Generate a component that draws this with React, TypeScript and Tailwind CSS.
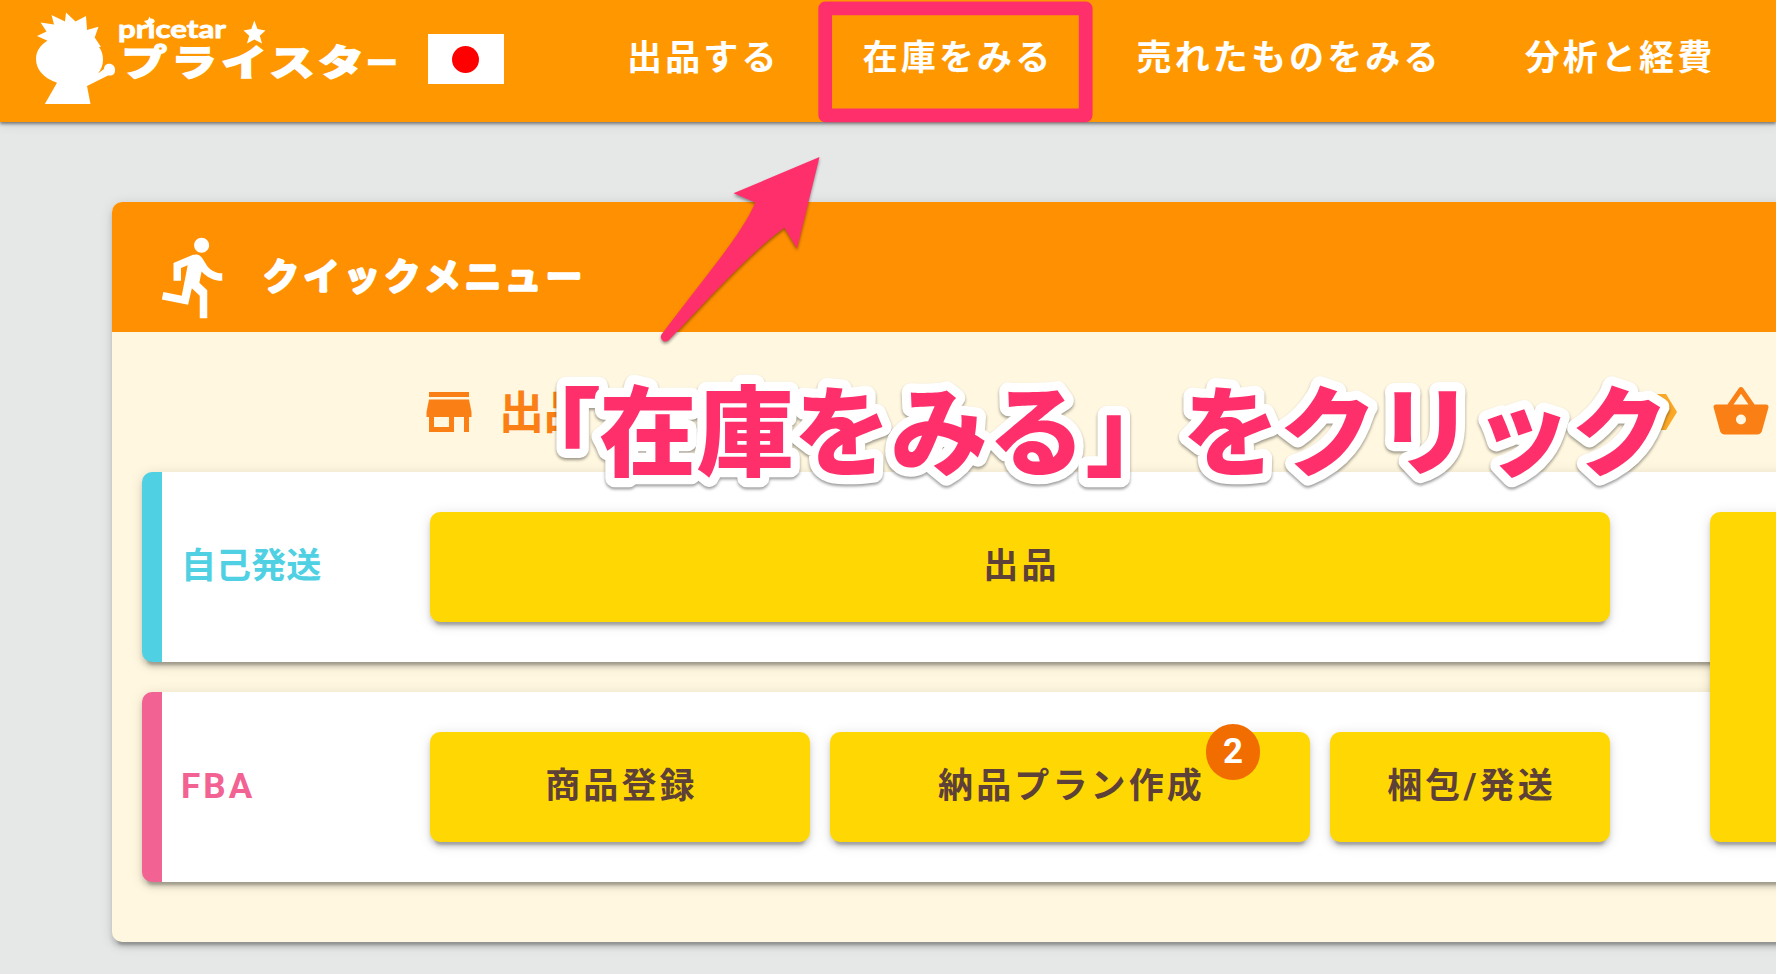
import React from "react";

const FONT = "font-[Roboto,'Noto_Sans_CJK_JP',sans-serif]";
const ELEVATION =
  "shadow-[0_7.5px_2.5px_-5px_rgba(0,0,0,0.2),0_5px_5px_0_rgba(0,0,0,0.14),0_2.5px_12.5px_0_rgba(0,0,0,0.12)]";

function Logo() {
  return (
    <svg className="block shrink-0" width="364" height="94" viewBox="34 11 364 94" fill="#fff">
      <path d="M36 59C36 51 41 44 47.5 40.7L37 36L46.500 31.500L40.600 22.500L54 24.500L51.500 15L65 21.500L66 12.500L75.500 21.500L86 16L87 30L98.500 26.700L94.700 37.500L101 47L99 47C102 51 103 55 103 60C103 65 101 69.500 98 73.500L104 69C104 62 114 62 115 69C115.500 74 113 76 108 75.500L87 86L90.500 104H44.800L57 82.700C43 78 36 69 36 59Z" />
      <path d="M254.300 20.500L257.500 29L265.500 30.500L259.800 35.800L262 43.500L254.300 39.500L247 43.500L249.200 35.800L243.500 30.500L251.300 29Z" />
      <path d="M149.500 16.500L151 20L155 21L152 24L152.500 27H146.500L147 24L144 21L148 20Z" />
      <text x="118" y="38" fontSize="25" fontWeight="700" textLength="108" lengthAdjust="spacingAndGlyphs" fontFamily="Lato, sans-serif" stroke="#fff" strokeWidth="0.8">
        pricetar
      </text>
      <g transform="scale(1.25 1)" fontWeight="900" textAnchor="middle" fontFamily="'Noto Sans CJK JP', sans-serif" stroke="#fff" strokeWidth="1.400">
        <text x="115.500 155.200 195.200 233.600 272.800" y="76" fontSize="36.500">
          プライスタ
        </text>
        <text x="305.500" y="72" fontSize="25">
          ー
        </text>
      </g>
    </svg>
  );
}

function Icon({ d, className }: { d: string; className: string }) {
  return (
    <svg className={`block shrink-0 ${className}`} viewBox="0 0 24 24" fill="currentColor">
      <path d={d} />
    </svg>
  );
}

const RUN =
  "M13.5,5.5C14.59,5.5 15.5,4.58 15.5,3.5C15.5,2.38 14.59,1.5 13.5,1.5C12.39,1.5 11.5,2.38 11.5,3.5C11.5,4.58 12.39,5.5 13.5,5.5M9.89,19.38L10.89,15L13,17V23H15V15.5L12.89,13.5L13.5,10.5C14.79,12 16.79,13 19,13V11C17.09,11 15.5,10 14.69,8.58L13.69,7C13.29,6.38 12.69,6 12,6C11.69,6 11.5,6.08 11.19,6.08L6,8.28V13H8V9.58L9.79,8.88L8.19,17L3.29,16L2.89,18L9.89,19.38Z";
const STORE =
  "M12,18H6V14H12M21,14V12L20,7H4L3,12V14H4V20H14V14H18V20H20V14M20,4H4V6H20V4Z";
const BASKET =
  "M5.5,21C4.72,21 4.04,20.55 3.71,19.9V19.9L1.1,10.44L1,10A1,1 0 0,1 2,9H6.58L11.18,2.43C11.36,2.17 11.66,2 12,2C12.34,2 12.65,2.17 12.83,2.44L17.42,9H22A1,1 0 0,1 23,10L22.96,10.29L20.29,19.9C19.96,20.55 19.28,21 18.5,21H5.5M12,4.74L9,9H15L12,4.74M12,13A2,2 0 0,0 10,15A2,2 0 0,0 12,17A2,2 0 0,0 14,15A2,2 0 0,0 12,13Z";

function Title() {
  return (
    <svg className="block shrink-0" width="360" height="130" viewBox="0 0 360 130">
      <text
        x="39 79.500 120 160.200 200.500 241 281 322"
        y="88"
        textAnchor="middle"
        fontSize="36"
        fontWeight="500"
        fontFamily="'Noto Sans CJK JP', sans-serif"
        fill="#fff"
        stroke="#fff"
        strokeWidth="3.600"
        strokeLinejoin="round"
      >
        クイックメニュー
      </text>
    </svg>
  );
}

function MenuButton({ label, className, badge }: { label: string; className: string; badge?: string }) {
  return (
    <button
      className={`relative flex h-[110px] shrink-0 items-center justify-center rounded-[10px] bg-[#ffd803] pt-px pl-[3px] text-[35px] font-bold tracking-[3.125px] whitespace-nowrap text-[#5d4037] ${ELEVATION} ${className}`}
    >
      {label}
      {badge && (
        <span className="absolute -top-2 right-[50px] flex h-14 w-[54px] items-center justify-center rounded-full bg-[#f26d00] text-[35px] tracking-normal text-white">
          {badge}
        </span>
      )}
    </button>
  );
}

function Row({ label, accent, tracking, children }: { label: string; accent: string; tracking: string; children: React.ReactNode }) {
  return (
    <section className={`flex h-[190px] w-[1900px] items-center rounded-[10px] border-l-[20px] bg-white ${ELEVATION} ${accent}`}>
      <h2 className={`w-[268px] shrink-0 pt-px pl-[19px] text-[35px] font-bold whitespace-nowrap ${tracking}`}>{label}</h2>
      <div className="flex gap-5">{children}</div>
    </section>
  );
}

function Callout() {
  return (
    <svg className="pointer-events-none absolute top-0 left-0" width="1776" height="974" viewBox="0 0 1776 974">
      <rect x="825.200" y="8.300" width="260.500" height="107" fill="none" stroke="#ff2f6c" strokeWidth="13.700" strokeLinejoin="round" />
      <g className="drop-shadow-[0_2px_1.5px_rgba(0,0,0,0.4)]">
        <path
          fill="#ff2f6c"
          d="M819.500 157L733.500 193.300L755.300 202.500C744 231 708 273 661.500 334.500C659 338.500 664 344 668.500 340.500C704 304 748 254 784.300 227.700L797 248.500Z"
        />
        <text
          x="504 599.300"
          y="468"
          dy="1.500 -1.500"
          fontSize="97.200"
          fontWeight="900"
          fontFamily="'Noto Sans CJK JP', sans-serif"
          fill="#ff2f6c"
          stroke="#fff"
          strokeWidth="18.500"
          strokeLinejoin="round"
          paintOrder="stroke"
        >
          「在庫をみる」をクリック
        </text>
      </g>
    </svg>
  );
}

export default function App() {
  return (
    <div lang="ja" className={`relative h-[974px] w-full overflow-hidden bg-[#e5e8e7] ${FONT}`}>
      <header className="flex h-[122px] items-center bg-[#ff9800] pl-[34px] shadow-[0_2px_3px_0_rgba(0,0,0,0.45),0_2.5px_12px_0_rgba(0,0,0,0.08)]">
        <div className="-mt-1.5">
          <Logo />
        </div>
        <div className="-mt-1 ml-[30px] flex h-[50px] w-[76px] shrink-0 items-center justify-center bg-white pr-px">
          <span className="size-[27px] rounded-full bg-[#ff0000]" />
        </div>
        <nav className="ml-[123px] flex gap-[83.2px] pb-[3px] text-[35px] font-bold tracking-[3.125px] whitespace-nowrap text-white">
          <a>出品する</a>
          <a>在庫をみる</a>
          <a>売れたものをみる</a>
          <a>分析と経費</a>
        </nav>
      </header>

      <main className="pt-20 pl-28">
        <div className={`h-[740px] w-[2000px] overflow-hidden rounded-[10px] bg-[#fff7df] ${ELEVATION}`}>
          <div className="flex h-[130px] items-center bg-[#ff9002] pl-[39px] text-white">
            <Icon d={RUN} className="mt-5 size-[90px]" />
            <h1 className="ml-px">
              <Title />
            </h1>
          </div>

          <div className="flex h-[140px] items-center pt-5 pl-[307px] text-[45px] font-bold text-[#fa8016]">
            <Icon d={STORE} className="size-[60px]" />
            <span className="ml-5 w-[1140px] pt-1">出品</span>
            <svg className="block shrink-0" width="38" height="36" viewBox="0 0 38 36">
              <path d="M12 0H27L38 18L27 36H12Z" fill="#fba826" />
            </svg>
            <Icon d={BASKET} className="ml-[34px] size-[60px]" />
          </div>

          <div className="relative flex flex-col gap-[30px] pl-[30px]">
            <Row label="自己発送" accent="border-[#4fd0e3] text-[#4fd0e3]" tracking="tracking-[0.1px]">
              <MenuButton label="出品" className="w-[1180px]" />
            </Row>
            <Row label="FBA" accent="border-[#f26293] text-[#f26293]" tracking="tracking-[3.125px]">
              <MenuButton label="商品登録" className="w-[380px]" />
              <MenuButton label="納品プラン作成" className="w-[480px]" badge="2" />
              <MenuButton label="梱包/発送" className="w-[280px]" />
            </Row>
            <div className={`absolute top-10 left-[1598px] h-[330px] w-[300px] rounded-[10px] bg-[#ffd803] ${ELEVATION}`} />
          </div>
        </div>
      </main>

      <Callout />
    </div>
  );
}
